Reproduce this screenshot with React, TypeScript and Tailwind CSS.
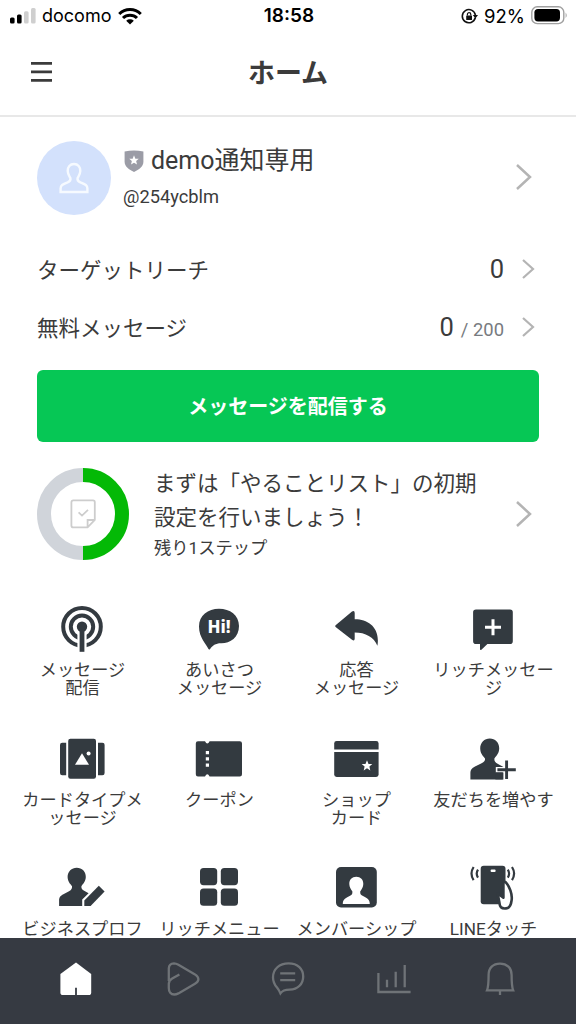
import type { ReactNode } from "react";

const INK = "#333a40";

function Chevron({ big = false }: { big?: boolean }) {
  return big ? (
    <svg width="18" height="28" viewBox="0 0 18 28" fill="none" stroke="#b4b4b4" strokeWidth="2.5">
      <path d="M2 2 L15 14 L2 26" />
    </svg>
  ) : (
    <svg width="14" height="22" viewBox="0 0 14 22" fill="none" stroke="#b4b4b4" strokeWidth="2.2">
      <path d="M2 2 L12 11 L2 20" />
    </svg>
  );
}

function StatusBar() {
  return (
    <div className="flex h-8 items-center font-['Inter',sans-serif] text-[18px] leading-8 text-black">
      <div className="flex flex-1 items-center pl-[10px]">
        <svg width="26" height="18" viewBox="0 0 26 18">
          <rect x="0" y="10.5" width="4.6" height="6" rx="1.5" fill="#000" />
          <rect x="7" y="7.5" width="4.6" height="9" rx="1.5" fill="#000" />
          <rect x="14" y="4.2" width="4.6" height="12.3" rx="1.5" fill="#cfcfcf" />
          <rect x="21" y="1" width="4.6" height="15.5" rx="1.5" fill="#cfcfcf" />
        </svg>
        <span className="ml-[6px] w-[70px] text-[18px]">docomo</span>
        <svg className="ml-[6px]" width="24" height="18" viewBox="0 0 24 18" fill="none" stroke="#000" strokeWidth="3">
          <path d="M1.2 7 A15.5 15.5 0 0 1 22.8 7" />
          <path d="M5 11 A10 10 0 0 1 19 11" />
          <path d="M12 17.4 L8.2 13.8 A5.6 5.6 0 0 1 15.8 13.8 Z" fill="#000" stroke="none" />
        </svg>
      </div>
      <span className="w-[56px] text-center text-[19px] font-semibold">18:58</span>
      <div className="flex flex-1 items-center justify-end pr-[8px]">
        <svg width="17" height="17" viewBox="0 0 17 17" fill="none" stroke="#111" strokeWidth="1.6">
          <path d="M14.3 9.8 A6.6 6.6 0 1 1 14.4 7" />
          <path d="M11.8 7 H17 L14.4 10.4 Z" fill="#111" stroke="none" />
          <rect x="5.2" y="7.4" width="5.8" height="4.6" rx="0.6" fill="#111" stroke="none" />
          <path d="M6.4 7.6 V6.4 a1.7 1.7 0 0 1 3.4 0 V7.6" strokeWidth="1.2" />
        </svg>
        <span className="ml-[6px] text-[18.5px]">92%</span>
        <svg className="ml-[6px] mb-[2px]" width="37" height="19" viewBox="0 0 37 19">
          <rect x="0.8" y="0.8" width="32" height="16.8" rx="5.4" fill="none" stroke="#a0a0a0" strokeWidth="1.4" />
          <rect x="3.4" y="3" width="25.6" height="12.4" rx="3.6" fill="#000" />
          <path d="M34.6 6.4 q2.2 2.8 0 5.6 Z" fill="#a0a0a0" />
        </svg>
      </div>
    </div>
  );
}

function Icon({ children }: { children: ReactNode }) {
  return (
    <svg className="relative -left-px" width="48" height="48" viewBox="0 0 48 48" fill={INK}>
      {children}
    </svg>
  );
}

const STAR = "M0 -5.6 L1.5 -1.9 L5.3 -1.7 L2.4 0.8 L3.3 4.6 L0 2.5 L-3.3 4.6 L-2.4 0.8 L-5.3 -1.7 L-1.5 -1.9 Z";

const items: { label: string[]; icon: ReactNode }[] = [
  {
    label: ["メッセージ", "配信"],
    icon: (
      <Icon>
        <circle cx="24" cy="22.8" r="18.8" fill="none" stroke={INK} strokeWidth="4" />
        <circle cx="24" cy="22.8" r="11.2" fill="none" stroke={INK} strokeWidth="4" />
        <rect x="19.4" y="23" width="9.2" height="25" fill="#fff" />
        <circle cx="24" cy="22.8" r="5.2" />
        <rect x="21.6" y="23" width="4.8" height="24.8" />
      </Icon>
    ),
  },
  {
    label: ["あいさつ", "メッセージ"],
    icon: (
      <Icon>
        <path d="M24 4.8 C35 4.8 44 11.3 44 22 C44 33.5 35 39.5 26 39.3 C20.5 39.3 17.5 41.5 15 45.2 Q14 46 13.3 44.8 C11.5 40 4 34 4 22.5 C4 11.3 13 4.8 24 4.8 Z" />
        <text x="24" y="29.4" fill="#fff" textAnchor="middle" fontSize="17" fontWeight="800" className="font-['Noto_Sans',sans-serif]">
          Hi!
        </text>
      </Icon>
    ),
  },
  {
    label: ["応答", "メッセージ"],
    icon: (
      <Icon>
        <path d="M3.6 21.2 L20 7.6 Q22.6 6 22.7 9 V15.2 C36 15 48.5 23.5 45.4 41.8 C42 33 33.5 28.4 22.7 28.4 V34.8 Q22.5 37.8 20 35.8 L3.6 23 Q2.8 22 3.6 21.2 Z" />
      </Icon>
    ),
  },
  {
    label: ["リッチメッセー", "ジ"],
    icon: (
      <Icon>
        <path d="M7 5.4 H41 Q43.8 5.4 43.8 8.2 V37.2 Q43.8 40 41 40 H18.4 L12.4 45.8 Q11 46.6 11 45 V40 H7 Q4.1 40 4.1 37.2 V8.2 Q4.1 5.4 7 5.4 Z" />
        <path d="M24 15.2 V31.2 M16 23.2 H32" stroke="#fff" strokeWidth="3" />
      </Icon>
    ),
  },
  {
    label: ["カードタイプメ", "ッセージ"],
    icon: (
      <Icon>
        <rect x="10.2" y="4.8" width="27.8" height="40" rx="2.2" />
        <path d="M8.2 8.8 V41.2 H4.2 Q2 41.2 2 39 V11 Q2 8.8 4.2 8.8 Z" />
        <path d="M40 8.8 V41.2 H44.4 Q46.6 41.2 46.6 39 V11 Q46.6 8.8 44.4 8.8 Z" />
        <path d="M24 19.2 L31 30.8 H17 Z" fill="#fff" />
        <circle cx="30.6" cy="19.6" r="2" fill="#fff" />
      </Icon>
    ),
  },
  {
    label: ["クーポン"],
    icon: (
      <Icon>
        <path d="M3 7.2 H10 Q12.3 11.6 14.6 7.2 H44.8 Q47 7.2 47 9.4 V40.2 Q47 42.4 44.8 42.4 H14.6 Q12.3 38 10 42.4 H3 Q0.8 42.4 0.8 40.2 V9.4 Q0.8 7.2 3 7.2 Z" />
        <path d="M10.8 17 h3.2 v3.2 h-3.2 Z M10.8 23.3 h3.2 v3.2 h-3.2 Z M10.8 29.6 h3.2 v3.2 h-3.2 Z" fill="#fff" />
      </Icon>
    ),
  },
  {
    label: ["ショップ", "カード"],
    icon: (
      <Icon>
        <path d="M4.6 7 H44.2 Q46.6 7 46.6 9.4 V15.4 H2.2 V9.4 Q2.2 7 4.6 7 Z" />
        <path d="M2.2 18 H46.6 V40.6 Q46.6 43 44.2 43 H4.6 Q2.2 43 2.2 40.6 Z" />
        <path d={STAR} transform="translate(35 31.8)" fill="#fff" />
      </Icon>
    ),
  },
  {
    label: ["友だちを増やす"],
    icon: (
      <Icon>
        <path d="M20.8 4.6 C26.2 4.6 30.4 8.6 30.2 14.6 C30 19.4 27.8 21.4 25.4 24.6 C25.2 27 26 28.4 29 30 L34.5 33 V45.4 H1.4 V39.6 C1.4 35.6 2.8 34.4 6 32.6 L12.6 29.2 C15.6 27.6 16.2 26.6 16 24.6 C13.4 21.4 11.4 19.4 11.2 14.6 C11.2 8.6 15.4 4.6 20.8 4.6 Z" />
        <path d="M37.6 25 V46.5 M26.8 35.7 H48" stroke="#fff" strokeWidth="5.6" />
        <path d="M26.4 38.4 H33.8 V45.4 H26.4 Z" />
        <path d="M37.6 26.6 V45 M28.4 35.7 H46.8" stroke={INK} strokeWidth="2.9" />
      </Icon>
    ),
  },
  {
    label: ["ビジネスプロフ"],
    icon: (
      <Icon>
        <path d="M18.7 4.7 C24 4.7 28 8.6 27.8 14 C27.6 18.4 25.6 20.2 23.4 23.2 C23.2 25.4 24 26.6 26.6 28 L30.6 30.2 L24.2 36.6 V43 H1.1 V37.8 C1.1 34 2.4 32.8 5.4 31.2 L11 28.2 C13.6 26.8 14.2 25.6 14 23.2 C11.6 20.2 9.8 18.4 9.6 14 C9.6 8.6 13.6 4.7 18.7 4.7 Z" />
        <path d="M40.8 22.8 L46.6 28.6 L32.6 43 H26.3 V37.4 Z" />
      </Icon>
    ),
  },
  {
    label: ["リッチメニュー"],
    icon: (
      <Icon>
        <rect x="5" y="5" width="17.2" height="17.2" rx="3.6" />
        <rect x="25.8" y="5" width="17.2" height="17.2" rx="3.6" />
        <rect x="5" y="25.6" width="17.2" height="17.2" rx="3.6" />
        <rect x="25.8" y="25.6" width="17.2" height="17.2" rx="3.6" />
      </Icon>
    ),
  },
  {
    label: ["メンバーシップ"],
    icon: (
      <Icon>
        <rect x="4" y="4" width="40.8" height="40.4" rx="5" />
        <path d="M24.3 13.8 C28.6 13.8 31.4 16.8 31.3 21 C31.2 24.4 29.8 26 28.2 28.4 C28 31 29 32 31 33 C35 35 37.8 36.4 37.8 41 H10.8 C10.8 36.4 13.6 35 17.6 33 C19.6 32 20.6 31 20.4 28.4 C18.8 26 17.4 24.4 17.3 21 C17.2 16.8 20 13.8 24.3 13.8 Z" fill="#fff" />
      </Icon>
    ),
  },
  {
    label: ["LINEタッチ"],
    icon: (
      <Icon>
        <rect x="11.7" y="2.8" width="24.8" height="38.4" rx="3" />
        <rect x="21.6" y="6.6" width="5" height="2.4" rx="1" fill="#fff" />
        <path
          d="M36.6 19.2 C40.4 23 43.6 31 42.6 37.4 C42 42.6 40.6 45.2 37 45.4 C32 45.8 30.8 44 30.4 39.6 L28.6 30.2 L34.4 34.6 V21 Q34.6 18 36.6 19.2 Z"
          fill="#fff"
          stroke={INK}
          strokeWidth="2.6"
          strokeLinejoin="round"
        />
        <path
          d="M9 6.6 Q6.4 10.6 9 14.6 M4.6 4 Q0.4 10.6 4.6 17.2 M38.8 6.6 Q41.4 10.6 38.8 14.6 M43 4 Q47.2 10.6 43 17.2"
          fill="none"
          stroke={INK}
          strokeWidth="2.2"
        />
      </Icon>
    ),
  },
];

function BottomNav() {
  const line = { width: 36, height: 36, viewBox: "0 0 36 36", fill: "none", stroke: "#6f7377", strokeWidth: 2.3 };
  return (
    <nav className="grid h-[86px] shrink-0 grid-cols-[repeat(5,106px)] justify-center bg-[#363a42] pt-[23px]">
      <div className="flex justify-center">
        <svg width="36" height="36" viewBox="0 0 36 36">
          <path d="M18 1.4 L33.2 13 V31.4 Q33.2 34 30.6 34 H5 Q2.4 34 2.4 31.4 V13 Z" fill="#fff" />
          <path d="M18 26.8 V34" stroke="#363a42" strokeWidth="1.8" />
        </svg>
      </div>
      <div className="flex justify-center">
        <svg {...line}>
          <path d="M4.8 20 V7.4 Q5 2.6 10 2.4 Q12 2.4 14.4 3.8 L31 13.4 Q34.4 15.6 34.4 18.2 Q34.4 20.8 31 22.8 L14.4 32.4 Q9 35 6 31.4 Q4.8 29.8 4.8 27 V22.6 Q5 19.6 8.2 17.6 L15.4 13.6" />
        </svg>
      </div>
      <div className="flex justify-center">
        <svg {...line}>
          <path d="M10.4 32.4 C9.6 30.6 9 29 7 26.6 C4.6 23.6 3 20.6 3 16.4 C3 8 9.4 2.4 18.6 2.4 C27.8 2.4 33.2 8 33.2 15.4 C33.2 22.8 28 28.6 19.6 28.6 C15 28.6 12.6 29.2 10.4 32.4 Z" />
          <path d="M10.2 12.4 H25.2 M10.2 19.2 H25.2" />
        </svg>
      </div>
      <div className="flex justify-center">
        <svg {...line}>
          <path d="M2.4 12 V31 H34.6 M11 18.8 V26.2 M19.7 10.8 V26.2 M28.7 4 V26.2" />
        </svg>
      </div>
      <div className="flex justify-center">
        <svg {...line}>
          <path d="M5 29.4 C6.4 26 6.6 24 6.6 14 C6.6 7 11 2.6 18 2.6 C25 2.6 29.6 7 29.6 14 C29.6 24 29.8 26 31.2 29.4 Z M18 29.4 V34" />
        </svg>
      </div>
    </nav>
  );
}

export default function App() {
  return (
    <div className="flex h-[1024px] w-[576px] flex-col overflow-hidden bg-white font-['Roboto','Noto_Sans_CJK_JP',sans-serif] text-[#3b3b3b]">
      <StatusBar />
      <header className="grid h-[85px] shrink-0 grid-cols-3 items-center border-b-2 border-[#e8e8e8] px-[31px]">
        <svg className="mb-[4px]" width="21" height="22" viewBox="0 0 21 22" stroke="#3b3b3b" strokeWidth="2.8">
          <path d="M0 2.3 H21 M0 10.9 H21 M0 19.4 H21" />
        </svg>
        <h1 className="text-center text-[27px] leading-[40px] font-bold">ホーム</h1>
      </header>

      <main className="flex min-h-0 flex-1 flex-col overflow-hidden">
        <section className="mt-[24px] flex h-[74px] shrink-0 items-center pr-[43px] pl-[37px]">
          <div className="flex size-[74px] items-center justify-center rounded-full bg-[#d3e1fc]">
            <svg width="32" height="34" viewBox="0 0 32 34" fill="none" stroke="#f6faff" strokeWidth="2.4">
              <path d="M16 3 C20 3 22.4 6 22.3 10 C22.2 13.6 20.6 15 19.6 17 C19 19.6 20 20.4 22.4 21.4 C27.6 23.4 29.4 24.4 29.4 27.4 V31 H2.6 V27.4 C2.6 24.4 4.4 23.4 9.6 21.4 C12 20.4 13 19.6 12.4 17 C11.4 15 9.8 13.6 9.7 10 C9.6 6 12 3 16 3 Z" />
            </svg>
          </div>
          <div className="ml-[12px] flex flex-1 flex-col pt-[2px]">
            <div className="flex h-[36px] items-center">
              <svg width="22" height="24" viewBox="0 0 22 24">
                <path d="M1.6 2.6 Q11 0.4 20.4 2.6 V12.6 C20.4 18 16 20.4 11 23 C6 20.4 1.6 18 1.6 12.6 Z" fill="#9b9ca6" />
                <path d={STAR} transform="translate(11 11.4) scale(.9)" fill="#fff" />
              </svg>
              <span className="ml-[6px] text-[25px] leading-[36px]">demo通知専用</span>
            </div>
            <span className="text-[18.3px] leading-[36px]">@254ycblm</span>
          </div>
          <div className="mb-[3px]">
            <Chevron big />
          </div>
        </section>

        <section className="mt-[25px] flex shrink-0 flex-col pr-[41px] pl-[37px] text-[21.5px]">
          <div className="flex h-[58px] items-center">
            <span className="flex-1 pt-[4px]">ターゲットリーチ</span>
            <span className="mr-[17px] text-[25.5px]">0</span>
            <Chevron />
          </div>
          <div className="flex h-[58px] items-center">
            <span className="flex-1 pt-[4px]">無料メッセージ</span>
            <span className="mr-[17px] flex items-baseline pt-[1px] text-[25.5px]">
              0<span className="ml-[7px] text-[18.4px] text-[#777b80]">/ 200</span>
            </span>
            <Chevron />
          </div>
        </section>

        <button className="mx-[37px] mt-[14px] h-[72px] shrink-0 rounded-[6px] bg-[#06c755] pt-px text-[20px] font-bold text-white">
          メッセージを配信する
        </button>

        <section className="mt-[26px] flex h-[92px] shrink-0 items-center pr-[43px] pl-[37px]">
          <svg width="92" height="92" viewBox="0 0 92 92" fill="none">
            <path d="M46 85 A39 39 0 0 1 46 7" stroke="#d0d4da" strokeWidth="14" />
            <path d="M46 7 A39 39 0 0 1 46 85" stroke="#04b906" strokeWidth="14" />
            <path d="M36.4 32.4 H56 Q57.8 32.4 57.8 34.2 V52 L50.6 59.4 H36.4 Q34.4 59.4 34.4 57.4 V34.4 Q34.4 32.4 36.4 32.4 Z M57.8 52 H50.6 V59.4 M41.6 44.4 L45 47.6 L51 41.8" stroke="#cdcdcd" strokeWidth="1.8" />
          </svg>
          <div className="ml-[25px] flex flex-1 flex-col text-[21.5px] leading-[34px] whitespace-nowrap">
            <span>まずは「やることリスト」の初期</span>
            <span>設定を行いましょう！</span>
            <span className="text-[17.3px] leading-[26px]">残り1ステップ</span>
          </div>
          <Chevron big />
        </section>

        <section className="mt-[44px] grid shrink-0 auto-rows-[129.5px] grid-cols-[repeat(4,137px)] justify-center">
          {items.map((item) => (
            <div key={item.label.join("")} className="flex flex-col items-center">
              {item.icon}
              <div className="mt-[9px] flex flex-col items-center text-[17.2px] leading-[18.4px] whitespace-nowrap">
                {item.label.map((l) => (
                  <span key={l}>{l}</span>
                ))}
              </div>
            </div>
          ))}
        </section>
      </main>
      <BottomNav />
    </div>
  );
}
